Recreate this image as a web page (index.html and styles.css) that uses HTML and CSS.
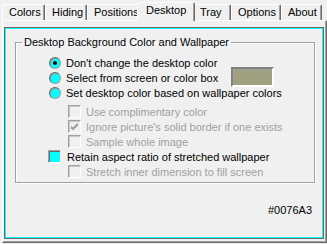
FILE: index.html
```html
<!DOCTYPE html>
<html lang="en">
<head>
    <meta charset="UTF-8">
    <title>Desktop</title>
    <link rel="stylesheet" href="styles.css">
</head>
<body>
    <div class="tabs">
        <div class="tab w-colors">Colors</div>
        <div class="tab w-hiding">Hiding</div>
        <div class="tab w-positions">Positions</div>
        <div class="tab active w-desktop">Desktop</div>
        <div class="tab w-tray">Tray</div>
        <div class="tab w-options">Options</div>
        <div class="tab w-about">About</div>
    </div>
    <div class="panel">
        <div class="frame">
            <div class="inner">
                <fieldset class="group">
                    <legend>Desktop Background Color and Wallpaper</legend>
                    <div class="opts">
                        <div class="opt"><span class="radio on"></span>Don't change the desktop color</div>
                        <div class="opt"><span class="radio"></span>Select from screen or color box<span class="swatch"></span></div>
                        <div class="opt"><span class="radio"></span>Set desktop color based on wallpaper colors</div>
                        <div class="opt sub first disabled"><span class="check"></span>Use complimentary color</div>
                        <div class="opt sub disabled"><span class="check">
                            <svg width="9" height="9" viewBox="0 0 9 9"><path d="M1 4 L3 6 L8 1 M1 5 L3 7 L8 2 M1 6 L3 8 L8 3" stroke="#a0a0a0" stroke-width="1" fill="none"/></svg>
                        </span>Ignore picture's solid border if one exists</div>
                        <div class="opt sub disabled"><span class="check"></span>Sample whole image</div>
                        <div class="opt"><span class="check live"></span>Retain aspect ratio of stretched wallpaper</div>
                        <div class="opt sub disabled"><span class="check"></span>Stretch inner dimension to fill screen</div>
                    </div>
                </fieldset>
                <div class="hex">#0076A3</div>
            </div>
        </div>
    </div>
</body>
</html>
```

FILE: styles.css
```css
/* page */
body {
    margin: 0;
    width: 327px;
    height: 244px;
    background: #f0f0f0;
    font-family: "Liberation Sans", Arial, sans-serif;
    font-size: 11px;
    color: #000;
    overflow: hidden;
}

/* tab strip */
.tabs {
    display: flex;
    align-items: flex-end;
    height: 20px;
    padding-left: 2px;
}

.tab {
    box-sizing: border-box;
    height: 16px;
    line-height: 14px;
    padding-left: 6px;
    border-top: 1px solid #fff;
    border-left: 1px solid #fff;
    border-right: 1px solid #696969;
    box-shadow: inset -1px 0 #a0a0a0;
    border-radius: 2px 2px 0 0;
}

.tab.active {
    position: relative;
    z-index: 1;
    height: 19px;
    margin: 0 -2px -1px;
    padding-left: 8px;
    line-height: 14px;
    background: #f0f0f0;
}

.w-colors { width: 43px; }
.w-hiding { width: 42px; }
.w-positions { width: 52px; }
.w-desktop { width: 58px; }
.w-tray { width: 38px; }
.w-options { width: 50px; }
.w-about { width: 41px; }

/* page body of the tab control */
.panel {
    box-sizing: border-box;
    width: 325px;
    height: 223px;
    margin-left: 2px;
    padding: 6px 2px 3px 1px;
    border-top: 1px solid #fff;
    border-left: 1px solid #fff;
    border-right: 1px solid #696969;
    border-bottom: 1px solid #696969;
    box-shadow: inset -1px -1px #a0a0a0;
}

.frame {
    height: 100%;
    box-sizing: border-box;
    border: 1px solid #696969;
}

.inner {
    height: 100%;
    box-sizing: border-box;
    border: 1px solid #00ffff;
    padding: 7px 7px 0 9px;
}

/* group box */
.group {
    margin: 0;
    padding: 6px 0 3px 0;
    border: 1px solid #a0a0a0;
    box-shadow: inset 1px 1px #fff, 1px 1px #fff;
    min-width: 0;
}

.group legend {
    margin-left: 6px;
    padding: 0 2px;
    line-height: 13px;
}

.opts {
    padding-left: 33px;
}

.opt {
    display: flex;
    align-items: center;
    height: 15px;
    white-space: nowrap;
}

.opt.sub {
    padding-left: 19px;
}

.opt.first {
    margin-top: 4px;
}

.disabled {
    color: #a0a0a0;
}

/* radio buttons */
.radio {
    position: relative;
    box-sizing: border-box;
    width: 12px;
    height: 12px;
    margin-right: 5px;
    border-radius: 50%;
    border: 1px solid #a0a0a0;
    border-top-color: #696969;
    border-left-color: #696969;
    background: #00ffff;
    box-shadow: inset 1px 1px #a0a0a0;
}

.radio.on::after {
    content: "";
    position: absolute;
    left: 3px;
    top: 3px;
    width: 4px;
    height: 4px;
    border-radius: 50%;
    background: #000;
}

/* check boxes */
.check {
    display: flex;
    align-items: center;
    justify-content: center;
    box-sizing: border-box;
    width: 13px;
    height: 13px;
    margin-right: 5px;
    border: 1px solid #fff;
    border-top-color: #a0a0a0;
    border-left-color: #a0a0a0;
    box-shadow: inset 1px 1px #c8c8c8;
    background: #f0f0f0;
}

.check.live {
    margin-left: -1px;
    margin-right: 6px;
    border-color: #a0a0a0 #fff #fff #a0a0a0;
    box-shadow: inset 1px 1px #696969;
    background: #00ffff;
}

.swatch {
    box-sizing: border-box;
    width: 43px;
    height: 20px;
    margin-left: 13px;
    margin-top: -2px;
    border: 2px solid #fff;
    border-top-color: #808080;
    border-left-color: #808080;
    box-shadow: inset 1px 1px #a0a0a0;
    background: #a0a080;
}

.hex {
    margin-top: 21px;
    padding-right: 3px;
    text-align: right;
}
```
